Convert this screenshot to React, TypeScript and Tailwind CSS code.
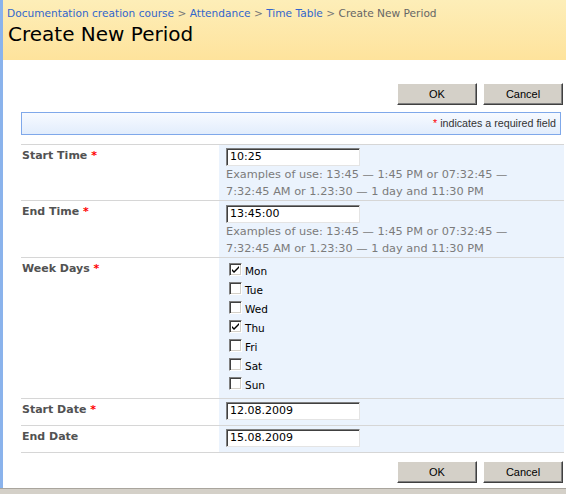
import React from "react";

const crumbs = ["Documentation creation course", "Attendance", "Time Table"];
const days = [
  { name: "Mon", checked: true },
  { name: "Tue", checked: false },
  { name: "Wed", checked: false },
  { name: "Thu", checked: true },
  { name: "Fri", checked: false },
  { name: "Sat", checked: false },
  { name: "Sun", checked: false },
];

function Button({ label }: { label: string }) {
  return (
    <button className="h-[22px] w-[80px] bg-[#d4d0c8] border border-t-white border-l-white border-r-[#404040] border-b-[#404040] shadow-[inset_-1px_-1px_0_#808080] text-[11px] text-black font-['Liberation_Sans',sans-serif]">
      {label}
    </button>
  );
}

function TextBox({ value }: { value: string }) {
  return (
    <div className="h-[18px] w-[134px] bg-white border border-t-[#808080] border-l-[#808080] border-r-[#e4e4e4] border-b-[#e4e4e4] shadow-[inset_1px_1px_0_#404040] pl-[3px] text-[11px] leading-[16px] text-black">
      {value}
    </div>
  );
}

function Checkbox({ checked }: { checked: boolean }) {
  return (
    <span className="flex h-[13px] w-[13px] items-center justify-center bg-white border border-t-[#808080] border-l-[#808080] border-r-white border-b-white shadow-[inset_1px_1px_0_#404040,inset_-1px_-1px_0_#d4d0c8]">
      {checked && (
        <svg width="9" height="9" viewBox="0 0 9 9">
          <path d="M1 4 L3 6 L8 1 L8 3 L3 8 L1 6 Z" fill="#000" />
        </svg>
      )}
    </span>
  );
}

function Label({ text, required }: { text: string; required?: boolean }) {
  return (
    <div className="pl-[1px] pt-[3px] text-[11px] font-bold text-[#525252]">
      {text}
      {required && <span className="text-[#ff0000]"> *</span>}
    </div>
  );
}

function Examples() {
  return (
    <div className="text-[11.3px] leading-[17px] text-[#7b7b7b]">
      Examples of use: 13:45 — 1:45 PM or 07:32:45 —
      <br />
      7:32:45 AM or 1.23:30 — 1 day and 11:30 PM
    </div>
  );
}

export default function App() {
  return (
    <div className="flex h-[494px] w-[566px] flex-col overflow-hidden bg-white font-['DejaVu_Sans',sans-serif]">
      <div className="flex h-[488px] flex-col border-l-[3px] border-[#8ab3ec]">
        <header className="h-[60px] bg-gradient-to-b from-[#fdeeb8] to-[#fee39c] pl-[4px] pt-[7px]">
          <div className="text-[10.6px] leading-[13px] text-[#3366cc]">
            {crumbs.map((c) => (
              <span key={c}>
                {c}
                <span className="text-[#777]"> &gt; </span>
              </span>
            ))}
            <span className="text-[#666]">Create New Period</span>
          </div>
          <h1 className="mt-[1px] pl-[1px] text-[20px] leading-[26px] text-black">Create New Period</h1>
        </header>

        <div className="pl-[18px] pr-[2px]">
          <div className="mt-[23px] flex justify-end gap-[6px] pr-[1px]">
            <Button label="OK" />
            <Button label="Cancel" />
          </div>

          <div className="mr-[3px] mt-[7px] flex h-[23px] items-center justify-end border border-[#7fa8ea] bg-gradient-to-b from-[#f7faff] to-[#e2edfc] pr-[4px] font-['Liberation_Sans',sans-serif] text-[10.7px] text-[#333]">
            <span className="mr-[3px] text-[#ff0000]">*</span>indicates a required field
          </div>

          <div className="mt-[9px] grid grid-cols-[198px_1fr] border-t border-[#d6d6d6]">
            <Label text="Start Time" required />
            <div className="h-[55px] bg-[#ebf3fd] pl-[7px] pt-[3px]">
              <TextBox value="10:25" />
              <Examples />
            </div>

            <div className="col-span-2 border-t border-[#d6d6d6]" />
            <Label text="End Time" required />
            <div className="h-[56px] bg-[#ebf3fd] pl-[7px] pt-[4px]">
              <TextBox value="13:45:00" />
              <Examples />
            </div>

            <div className="col-span-2 border-t border-[#d6d6d6]" />
            <Label text="Week Days" required />
            <div className="flex h-[140px] flex-col bg-[#ebf3fd] pl-[10px] pt-[5px]">
              {days.map((d) => (
                <div key={d.name} className="flex h-[19px] items-start gap-[3px]">
                  <Checkbox checked={d.checked} />
                  <span className="mt-[2px] text-[10.5px] leading-[13px] text-black">{d.name}</span>
                </div>
              ))}
            </div>

            <div className="col-span-2 border-t border-[#d6d6d6]" />
            <Label text="Start Date" required />
            <div className="h-[26px] bg-[#ebf3fd] pl-[7px] pt-[3px]">
              <TextBox value="12.08.2009" />
            </div>

            <div className="col-span-2 border-t border-[#d6d6d6]" />
            <Label text="End Date" />
            <div className="h-[26px] bg-[#ebf3fd] pl-[7px] pt-[3px]">
              <TextBox value="15.08.2009" />
            </div>
            <div className="col-span-2 border-t border-[#d6d6d6]" />
          </div>

          <div className="mt-[8px] flex justify-end gap-[6px] pr-[1px]">
            <Button label="OK" />
            <Button label="Cancel" />
          </div>
        </div>
      </div>
      <div className="h-[6px] border-t border-[#a9a59d] bg-[#d4d0c8]" />
    </div>
  );
}
